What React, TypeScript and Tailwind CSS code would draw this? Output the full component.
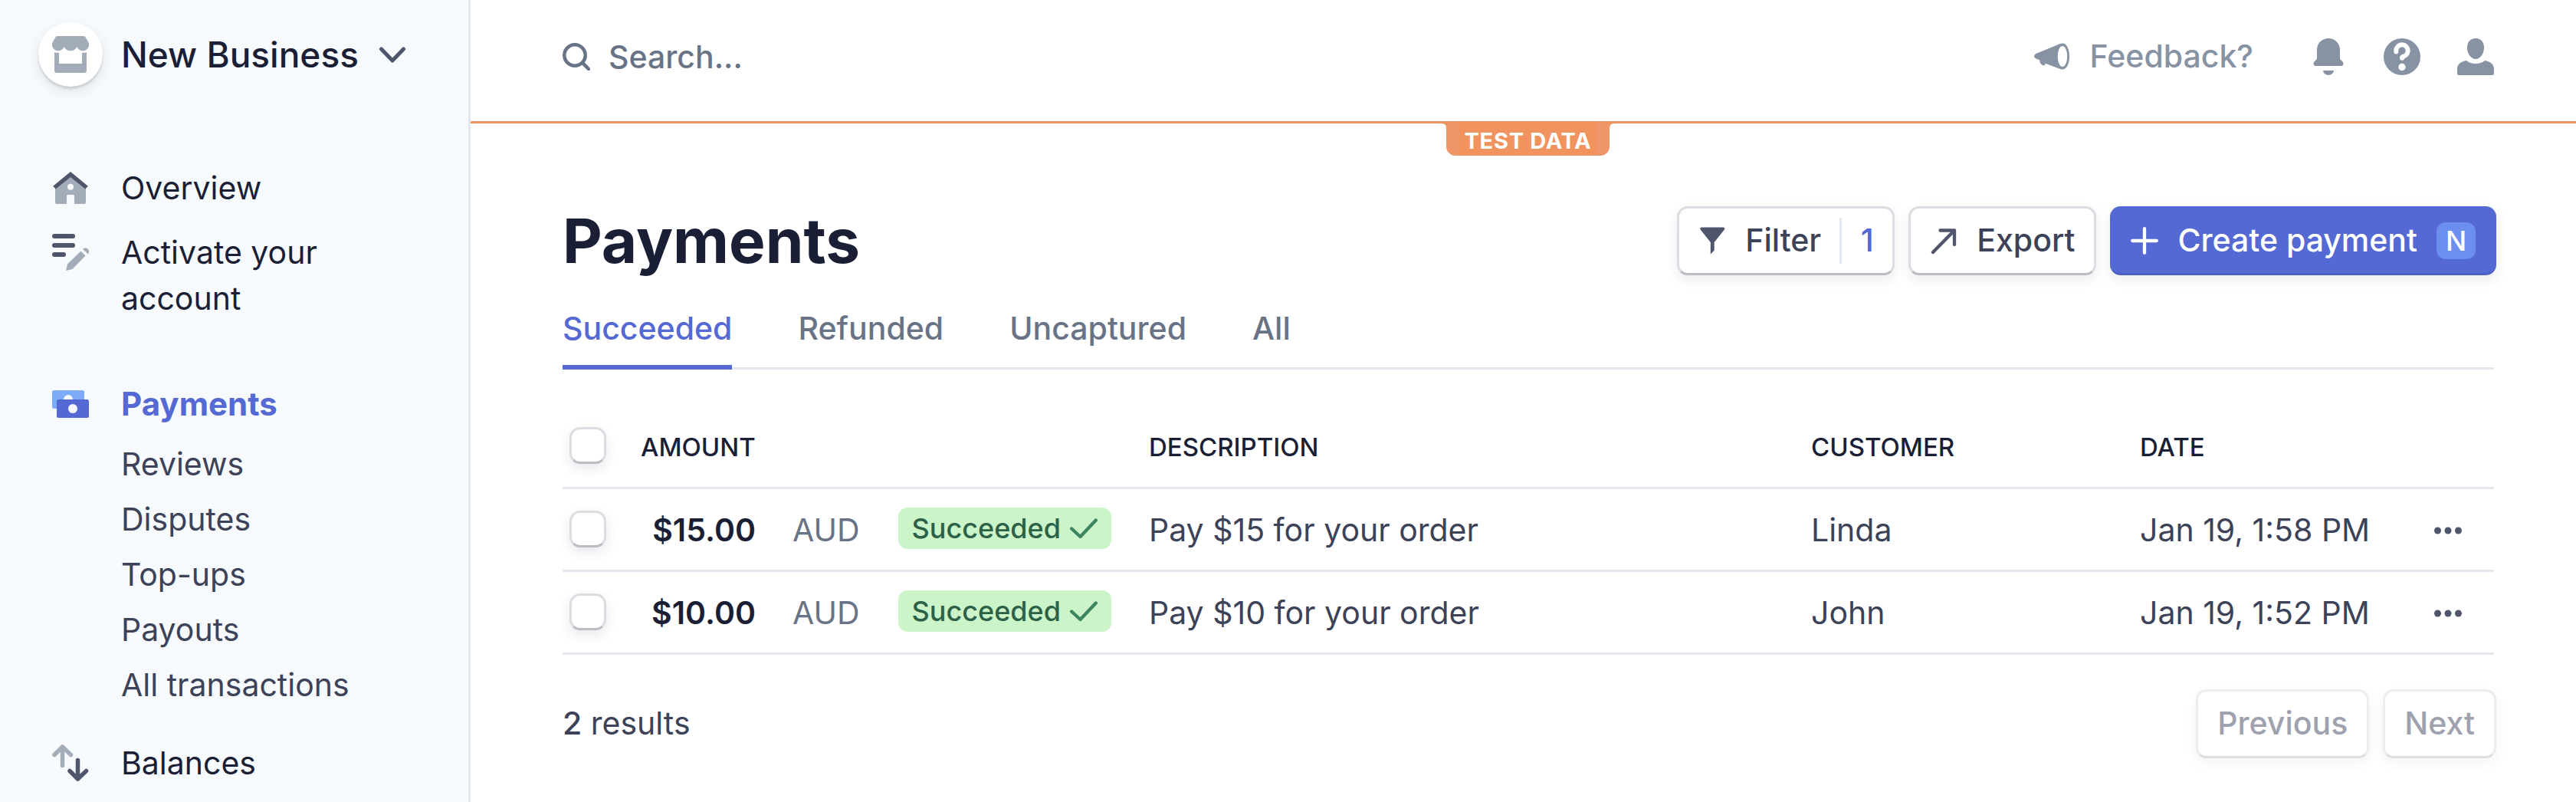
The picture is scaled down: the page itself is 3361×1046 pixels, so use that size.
import React from "react";

const SLATE = "#4f566b";
const GREY = "#a3acb9";

function StoreIcon() {
  return (
    <svg viewBox="0 0 48 48" className="size-12" fill={GREY}>
      <path d="M7 0h34a3 3 0 0 1 2.500 1.500L48 9v1.500a8 8 0 0 1-15.500 3.500a9.500 9.500 0 0 1-17 0A8 8 0 0 1 0 10.500V9l4.500-7.500A3 3 0 0 1 7 0z" />
      <path d="M3 21q3 1.500 6 .500V36h30V21.500q3 1 6-.500V45a3 3 0 0 1-3 3H6a3 3 0 0 1-3-3z" />
    </svg>
  );
}

function HomeIcon() {
  return (
    <svg viewBox="0 0 48 48" className="size-12">
      <path fillRule="evenodd" fill={GREY} d="M4 24 24 8l20 16v19a2 2 0 0 1-2 2H29V34.500a1.500 1.500 0 0 0-1.500-1.500h-7a1.500 1.500 0 0 0-1.500 1.500V45H6a2 2 0 0 1-2-2zM24 18.700a4 4 0 1 0 0 8a4 4 0 0 0 0-8z" />
      <path fill={SLATE} d="M24 3 46.800 21.800 43.300 25.500 24 10 4.700 25.500 1.200 21.800z" />
    </svg>
  );
}

function ActivateIcon() {
  return (
    <svg viewBox="0 0 48 48" className="size-12">
      <g fill={SLATE}>
        <rect width="30" height="6" rx="3" />
        <rect y="12" width="30" height="6" rx="3" />
        <rect y="24" width="18" height="6" rx="3" />
      </g>
      <g fill={GREY}>
        <path d="m37.500 22.500 6 6L26.500 46l-8.500 2 2-8.500z" />
        <path d="m40 20a5 5 0 0 1 7 0q2 3 0 6.500z" />
      </g>
    </svg>
  );
}

function PaymentsIcon() {
  return (
    <svg viewBox="0 0 48 48" className="size-12">
      <rect y="6" width="42" height="24" rx="2.500" fill="#7dabf8" />
      <circle cx="21" cy="18" r="6" fill="#f7fafc" />
      <rect x="6" y="18" width="42" height="24" rx="2.500" fill="#5469d4" />
      <circle cx="27" cy="30" r="6" fill="#f7fafc" />
    </svg>
  );
}

function BalancesIcon() {
  return (
    <svg viewBox="0 0 48 48" className="size-12" fill="none" strokeWidth="5.500" strokeLinecap="round" strokeLinejoin="round">
      <path d="M13.500 27.500V4M3 13.500 13.500 3 24.500 13.500" stroke={GREY} />
      <path d="M33.500 20.500V44M23 34.500 33.500 45 44.500 34.500" stroke={SLATE} />
    </svg>
  );
}

function SearchIcon() {
  return (
    <svg viewBox="0 0 36 36" className="size-9 shrink-0" fill="none" stroke="#697386" strokeWidth="4.500" strokeLinecap="round">
      <circle cx="16" cy="16" r="13.700" />
      <path d="m26 26 8 8" />
    </svg>
  );
}

function MegaphoneIcon() {
  return (
    <svg viewBox="0 0 48 36" className="h-9 w-12">
      <path fillRule="evenodd" fill="#8792a2" d="M37 .500c5.500 0 9 7.500 9 17s-3.500 17-9 17c-1 0-2-.200-3-.600L14.800 26.800 13.500 29.500q-2.500 0-5-2.500-1.500-1-1.200-4.500L2.500 20.600Q0 19.500 0 17.300t2.500-3.400L34 1.100q1.500-.600 3-.600zM37 4c-3.500 0-6.200 6-6.200 13.500S33.500 31 37 31s6.200-6 6.200-13.500S40.500 4 37 4z" />
    </svg>
  );
}

function BellIcon() {
  return (
    <svg viewBox="0 0 48 48" className="size-12" fill="#8792a2">
      <path d="M24 0c8.500 0 15 6.500 15 15v11c0 1.200.600 1.800 1.800 2.800q2.700 2 2.700 4.200a3 3 0 0 1-3 3h-33a3 3 0 0 1-3-3q0-2.200 2.700-4.200C8.400 27.800 9 27.200 9 26V15C9 6.500 15.500 0 24 0zM17 42h14a7 6 0 0 1-14 0z" />
    </svg>
  );
}

function HelpIcon() {
  return (
    <svg viewBox="0 0 48 48" className="size-12">
      <circle cx="24" cy="24" r="24" fill="#8792a2" />
      <path d="M16.300 17.500A7.800 7.800 0 1 1 26.500 23.500Q24 24 24 25.700" fill="none" stroke="#fff" strokeWidth="6" strokeLinecap="round" />
      <circle cx="24" cy="37.500" r="4.700" fill="#fff" />
    </svg>
  );
}

function PersonIcon() {
  return (
    <svg viewBox="0 0 48 48" className="size-12" fill="#8792a2">
      <path d="M24 0c7 0 11 5 11 12 0 8-5 15-11 15S13 20 13 12C13 5 17 0 24 0z" />
      <path d="M12 29c3 2.500 7 4 12 4s9-1.500 12-4c6 1 12 4 12 11v6a2 2 0 0 1-2 2H2a2 2 0 0 1-2-2v-6c0-7 6-10 12-11z" />
    </svg>
  );
}

const subItems = ["Reviews", "Disputes", "Top-ups", "Payouts", "All transactions"];

function NavItem({ icon, label, active }: { icon: React.ReactNode; label: string; active?: boolean }) {
  return (
    <a
      href="#"
      className={
        active
          ? "flex items-start gap-[42px] text-[42px] leading-[60px] font-bold text-[#5469d4]"
          : "flex items-start gap-[42px] text-[41px] leading-[60px] text-[#1a1f36]"
      }
    >
      <span className="flex h-[60px] w-12 shrink-0 items-center">{icon}</span>
      <span>{label}</span>
    </a>
  );
}

const rows = [
  { amount: "$15.00", description: "Pay $15 for your order", customer: "Linda", date: "Jan 19, 1:58 PM" },
  { amount: "$10.00", description: "Pay $10 for your order", customer: "John", date: "Jan 19, 1:52 PM" },
];

function Check({ label }: { label: string }) {
  return (
    <input
      type="checkbox"
      aria-label={label}
      className="ml-[9px] block size-12 appearance-none rounded-[14px] border-3 border-[#dcdce2] border-b-[#bcbdc3] bg-white shadow-[0_6px_15px_rgba(60,66,87,0.12)]"
    />
  );
}

const button =
  "flex h-[90px] items-center rounded-[14px] border-3 border-[#dcdce2] border-b-[#bcbdc3] bg-white text-[41px] font-medium text-[#3c4257] shadow-[0_6px_15px_rgba(60,66,87,0.1)]";
const pager =
  "flex h-[90px] items-center rounded-[14px] border-3 border-[#ededf0] border-b-[#dcdde0] bg-white px-[25px] text-[41px] font-medium text-[#9ea1ae] shadow-[0_6px_15px_rgba(60,66,87,0.06)]";

export default function App() {
  return (
    <div className="flex min-h-screen bg-white font-['Inter',sans-serif] text-[#3c4257]">
      <aside className="w-[614px] shrink-0 border-r-3 border-[#e3e8ee] bg-[#f7fafc] pl-[50px]">
        <button type="button" className="mt-[29px] flex items-center text-[46px] leading-[84px] font-medium text-[#1a1f36]">
          <span className="mr-6 flex size-[84px] items-center justify-center rounded-full bg-white shadow-[0_3px_3px_rgba(0,0,0,0.12),0_6px_15px_rgba(60,66,87,0.12)]">
            <StoreIcon />
          </span>
          New Business
          <svg viewBox="0 0 36 24" className="ml-[26px] h-6 w-9" fill="none" stroke={SLATE} strokeWidth="5" strokeLinecap="round" strokeLinejoin="round">
            <path d="m3.500 5 14.500 15L32.500 5" />
          </svg>
        </button>
        <nav className="mt-[102px] flex flex-col pr-[120px] pl-[18px]">
          <NavItem icon={<HomeIcon />} label="Overview" />
          <div className="mt-6">
            <NavItem icon={<ActivateIcon />} label="Activate your account" />
          </div>
          <div className="mt-[78px]">
            <NavItem icon={<PaymentsIcon />} label="Payments" active />
          </div>
          <ul className="mt-3 flex flex-col pl-[90px] text-[41px] leading-[72px]">
            {subItems.map((s) => (
              <li key={s}>
                <a href="#">{s}</a>
              </li>
            ))}
          </ul>
          <div className="mt-9">
            <NavItem icon={<BalancesIcon />} label="Balances" />
          </div>
        </nav>
      </aside>

      <div className="min-w-0 grow">
        <header className="relative flex h-[161px] items-center border-b-3 border-[#f0935f] pr-[107px] pb-[10px] pl-[120px] text-[41px] font-medium">
          <label className="flex grow items-center gap-6">
            <SearchIcon />
            <input
              type="text"
              aria-label="Search"
              placeholder="Search..."
              className="w-full leading-[60px] text-[#697386] outline-none placeholder:text-[#697386] placeholder:opacity-100"
            />
          </label>
          <button type="button" className="flex items-center gap-[25px] text-[#8792a2]">
            <MegaphoneIcon />
            Feedback?
          </button>
          <div className="ml-[74px] flex gap-12">
            <button type="button" aria-label="Notifications"><BellIcon /></button>
            <button type="button" aria-label="Help"><HelpIcon /></button>
            <button type="button" aria-label="Account"><PersonIcon /></button>
          </div>
          <div className="absolute inset-x-0 top-full flex items-start justify-center pl-3">
            <svg viewBox="0 0 6 6" className="mt-[3px] size-[6px]" fill="#f0935f">
              <path d="M0 0h6v6Q6 0 0 0z" />
            </svg>
            <span className="flex h-[45px] items-center rounded-b-xl border-x-[17px] border-[#ef956a] bg-[#f0935f] px-[7px] pt-[6px] text-[29px] font-bold tracking-wide whitespace-nowrap text-white">
              TEST DATA
            </span>
            <svg viewBox="0 0 6 6" className="mt-[3px] size-[6px]" fill="#f0935f">
              <path d="M6 0H0v6Q0 0 6 0z" />
            </svg>
          </div>
        </header>

        <main className="pr-[107px] pl-[120px]">
          <div className="-mr-[3px] mt-[108px] flex items-center">
            <h1 className="grow text-[80px] leading-[90px] font-bold text-[#1a1f36]">Payments</h1>
            <div className="flex gap-[18px]">
              <button type="button" className={button + " pl-[25px]"}>
                <svg viewBox="0 0 36 36" className="mr-[25px] size-9" fill={SLATE}>
                  <path d="M4 .500h28.500a1.800 1.800 0 0 1 1.300 3L20.700 20v10.500L15.800 35.500V20L2.700 3.500a1.800 1.800 0 0 1 1.300-3z" />
                </svg>
                Filter
                <span className="ml-6 flex h-[60px] w-[69px] items-center justify-center border-l-3 border-[#e3e8ee] text-[#5469d4]">1</span>
              </button>
              <button type="button" className={button + " px-[25px]"}>
                <svg viewBox="0 0 36 36" className="mr-[25px] size-9" fill="none" stroke={SLATE} strokeWidth="4.300" strokeLinecap="round" strokeLinejoin="round">
                  <path d="M4 33 32 4.500M13.500 4.500H32V23" />
                </svg>
                Export
              </button>
              <button type="button" className="flex h-[90px] items-center rounded-[14px] border-y-3 border-t-[#5469d4] border-b-[#4d60c3] bg-[#5469d4] px-[27px] text-[41px] font-medium text-white shadow-[0_6px_15px_rgba(60,66,87,0.1)]">
                <svg viewBox="0 0 36 36" className="mr-[25px] size-9" fill="none" stroke="#fff" strokeWidth="4.300" strokeLinecap="round">
                  <path d="M18 2.200v31.600M2.200 18h31.600" />
                </svg>
                Create payment
                <span className="ml-[25px] flex h-12 w-[51px] items-center justify-center rounded-xl bg-[#6c8eef] text-[36px]">N</span>
              </button>
            </div>
          </div>

          <div role="tablist" className="mt-[39px] flex gap-[86px] border-b-3 border-[#e3e8ee] text-[41px] leading-[60px] font-medium text-[#697386]">
            <button type="button" role="tab" aria-selected="true" className="-mb-[3px] border-b-6 border-[#5469d4] pb-[18px] text-[#5469d4]">Succeeded</button>
            <button type="button" role="tab" aria-selected="false" className="pb-[21px]">Refunded</button>
            <button type="button" role="tab" aria-selected="false" className="pb-[21px]">Uncaptured</button>
            <button type="button" role="tab" aria-selected="false" className="pb-[21px]">All</button>
          </div>

          <table className="mt-[46px] w-full table-fixed text-left text-[41px]">
            <colgroup>
              <col className="w-[66px]" />
              <col className="w-[699px]" />
              <col />
              <col className="w-[429px]" />
              <col className="w-[360px]" />
              <col className="w-[102px]" />
            </colgroup>
            <thead>
              <tr className="h-[108px] border-b-3 border-[#e3e8ee] text-[33px] text-[#1a1f36]">
                <th><Check label="Select all" /></th>
                <th className="pt-1 pl-9 font-medium">AMOUNT</th>
                <th className="pt-1 font-medium">DESCRIPTION</th>
                <th className="pt-1 font-medium">CUSTOMER</th>
                <th className="pt-1 font-medium">DATE</th>
                <th aria-label="Actions" />
              </tr>
            </thead>
            <tbody>
              {rows.map((r) => (
                <tr key={r.customer} className="h-[108px] border-b-3 border-[#e3e8ee]">
                  <td><Check label={"Select payment from " + r.customer} /></td>
                  <td className="pt-1 pl-9">
                    <span className="flex items-center">
                      <span className="w-[150px] text-right font-semibold text-[#1a1f36]">{r.amount}</span>
                      <span className="ml-12 text-[#697386]">AUD</span>
                      <span className="mb-[6px] ml-[50px] flex h-[54px] items-center rounded-xl bg-[#cbf4c9] px-[18px] text-[36px] font-medium text-[#2c6148]">
                        Succeeded
                        <svg viewBox="0 0 36 36" className="ml-3 size-9" fill="none" stroke="#3d855f" strokeWidth="4.300" strokeLinecap="round" strokeLinejoin="round">
                          <path d="M2.200 18.500 13.500 29 33.800 7.500" />
                        </svg>
                      </span>
                    </span>
                  </td>
                  <td className="pt-1">{r.description}</td>
                  <td className="pt-1">{r.customer}</td>
                  <td className="pt-1 whitespace-nowrap">{r.date}</td>
                  <td className="pt-1">
                    <button type="button" aria-label="More actions" className="ml-6 block">
                      <svg viewBox="0 0 36 36" className="size-9" fill={SLATE}>
                        <circle cx="4.500" cy="18" r="4.500" /><circle cx="18" cy="18" r="4.500" /><circle cx="31.500" cy="18" r="4.500" />
                      </svg>
                    </button>
                  </td>
                </tr>
              ))}
            </tbody>
          </table>

          <div className="-mr-[3px] mt-[45px] flex items-center justify-between text-[41px]">
            <p><span className="font-medium">2</span> results</p>
            <div className="flex gap-[18px]">
              <button type="button" disabled className={pager}>Previous</button>
              <button type="button" disabled className={pager}>Next</button>
            </div>
          </div>
        </main>
      </div>
    </div>
  );
}
